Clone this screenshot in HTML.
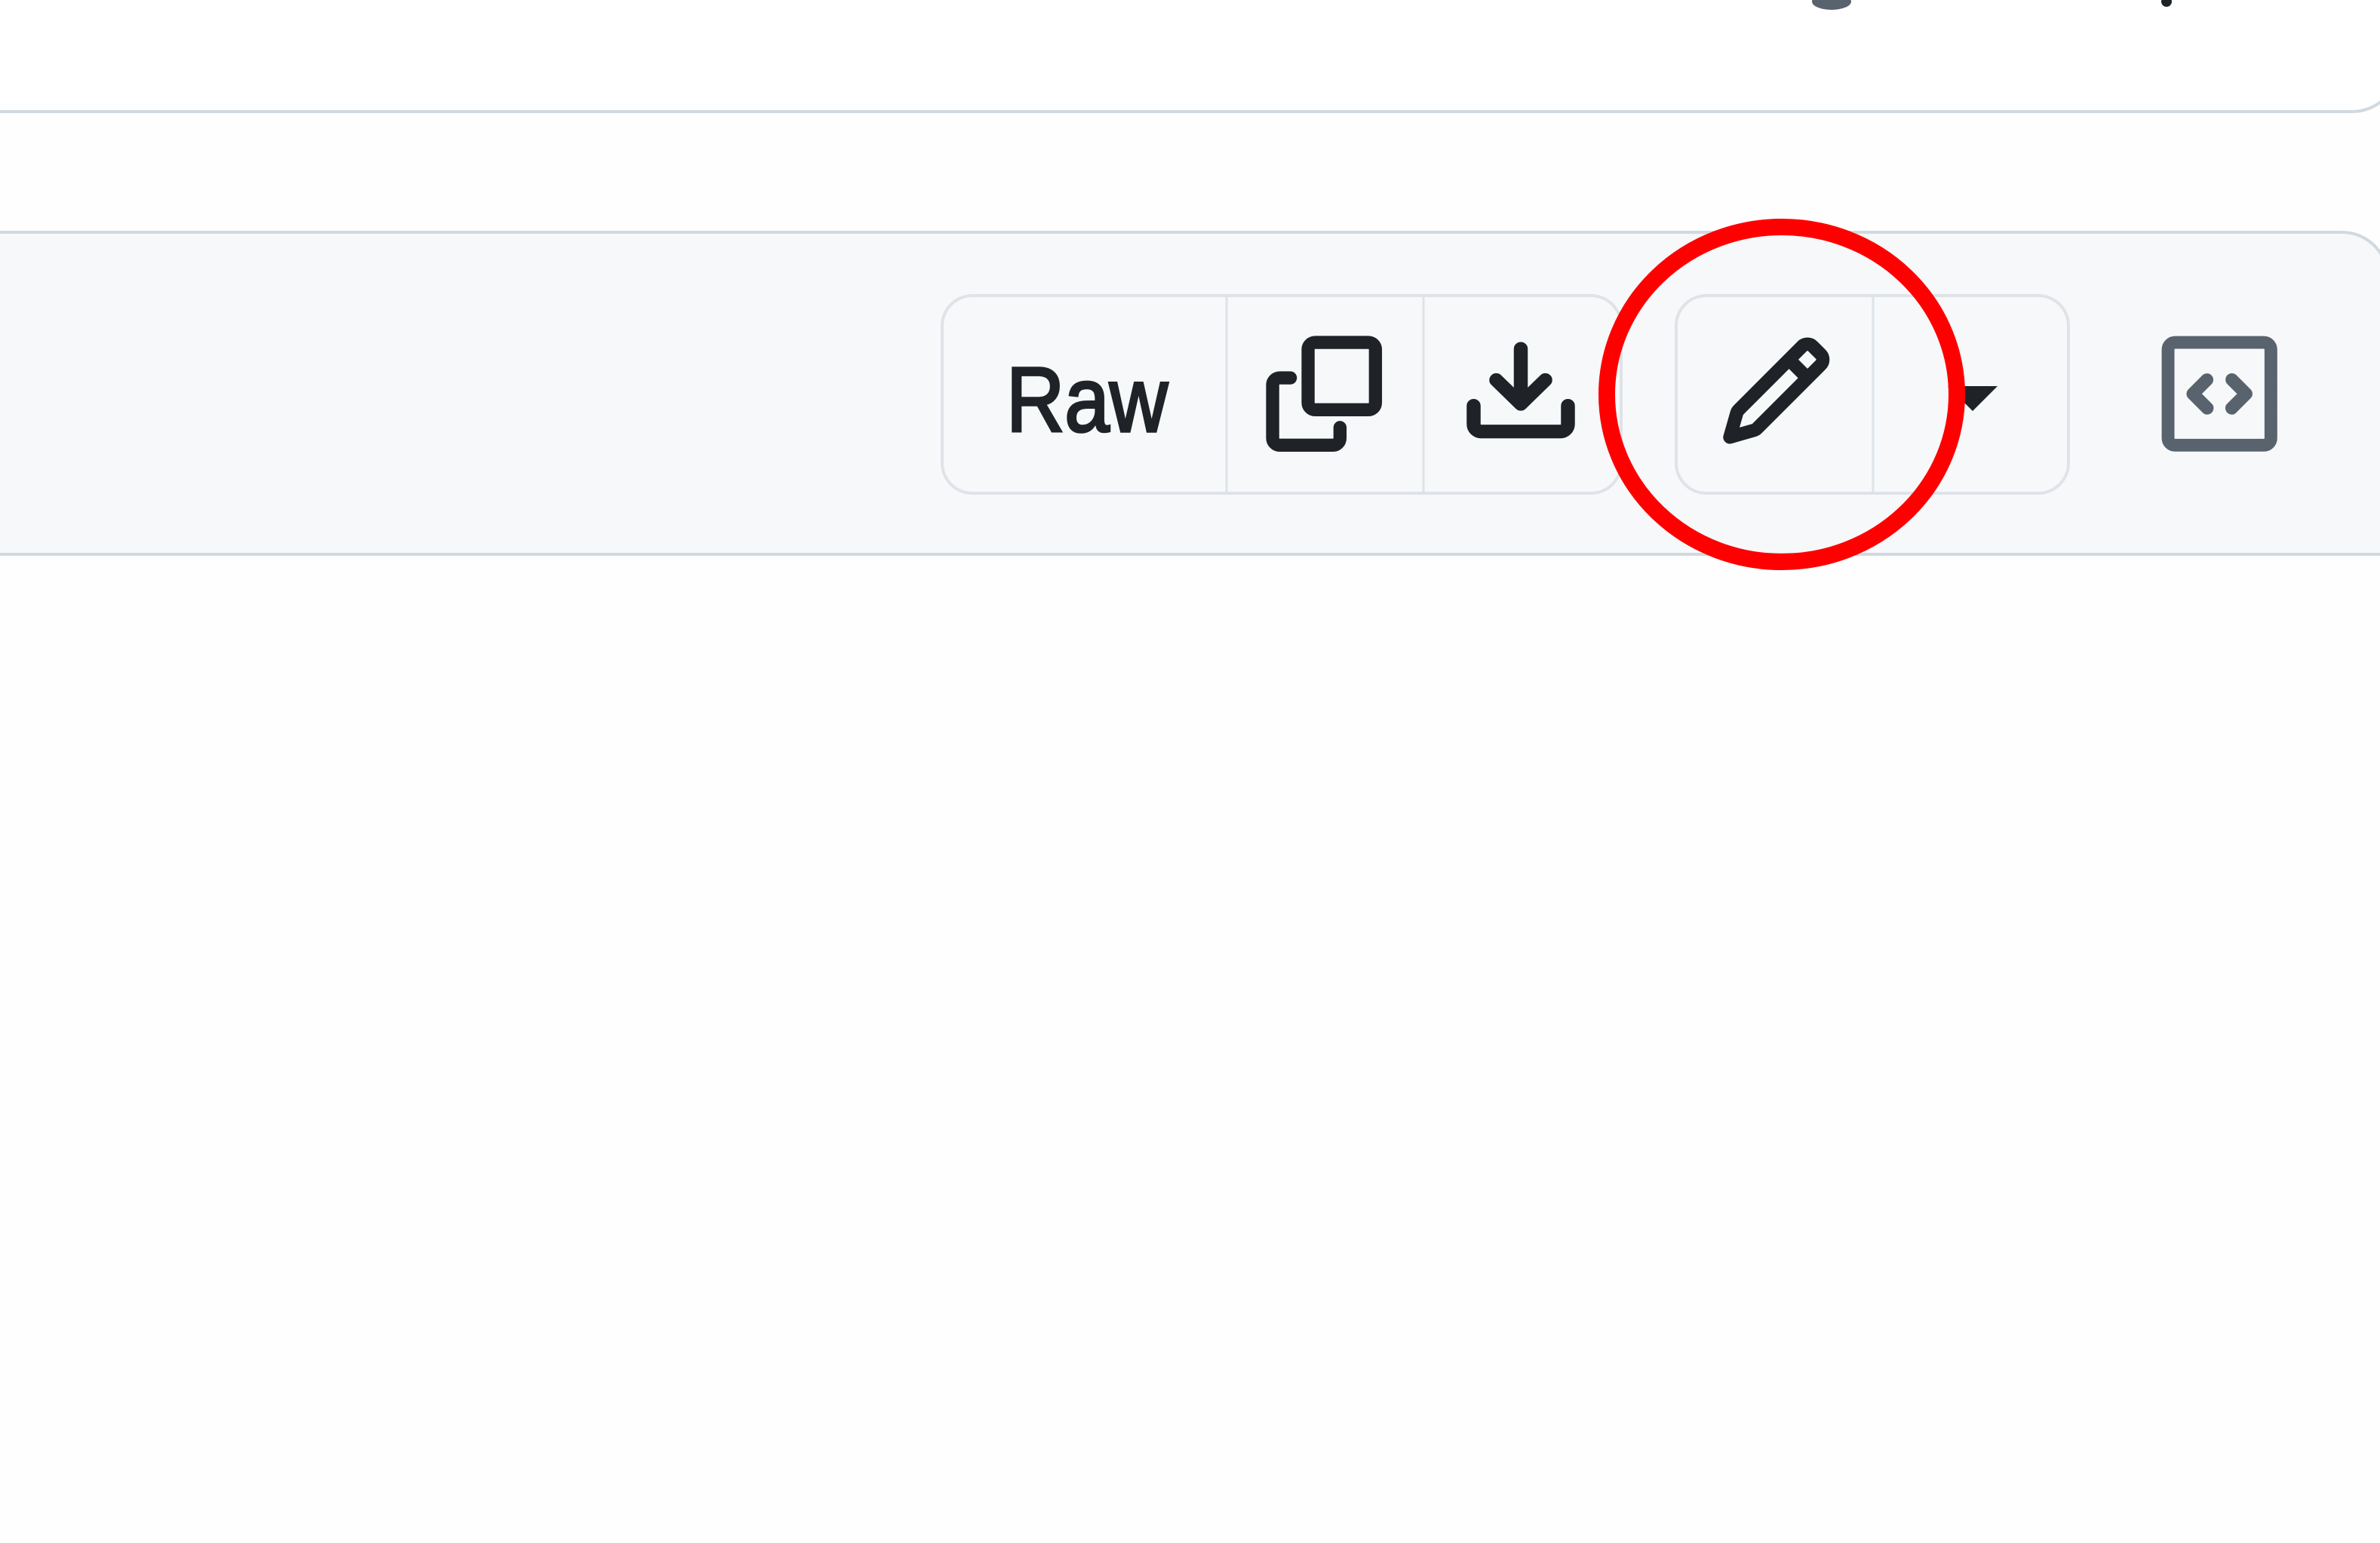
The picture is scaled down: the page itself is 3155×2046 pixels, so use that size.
<!DOCTYPE html>
<html><head><meta charset="utf-8"><style>
html,body{margin:0;padding:0;background:#fefefe;width:3155px;height:2046px;overflow:hidden}
svg{display:block}
</style></head><body>
<svg width="3155" height="2046" viewBox="0 0 3155 2046" xmlns="http://www.w3.org/2000/svg">
<rect width="3155" height="2046" fill="#fefefe"/>
<path d="M-10 -50 H3120 A60 60 0 0 1 3180 10 V86 A62 62 0 0 1 3118 148 H-10 Z" fill="#fff" stroke="#d1d9e0" stroke-width="4"/>
<ellipse cx="2428" cy="2" rx="26" ry="11" fill="#59636e"/>
<circle cx="2872" cy="2" r="7" fill="#1f2328"/>
<path d="M-10 308 H3105 A60 60 0 0 1 3165 368 V735 H-10 Z" fill="#f6f8fa" stroke="#d1d9e0" stroke-width="4"/>
<rect x="1249" y="392" width="900" height="262" rx="40" fill="#f6f8fa" stroke="#dfe3e8" stroke-width="4"/>
<line x1="1626" y1="394" x2="1626" y2="652" stroke="#dfe3e8" stroke-width="3"/>
<line x1="1887" y1="394" x2="1887" y2="652" stroke="#dfe3e8" stroke-width="3"/>
<text x="1334" y="572" font-family="Liberation Sans, sans-serif" font-size="122" fill="#1f2328" stroke="#1f2328" stroke-width="3.5" textLength="214" lengthAdjust="spacingAndGlyphs">Raw</text>
<g transform="translate(1680,447) scale(9.4)" fill="#1f2328" stroke="#1f2328" stroke-width="0.35">
<path d="M0 6.75C0 5.784.784 5 1.75 5h1.5a.75.75 0 0 1 0 1.5h-1.5a.25.25 0 0 0-.25.25v7.5c0 .138.112.25.25.25h7.5a.25.25 0 0 0 .25-.25v-1.5a.75.75 0 0 1 1.5 0v1.5A1.75 1.75 0 0 1 9.250 16h-7.5A1.75 1.75 0 0 1 0 14.25Z M5 1.75C5 .784 5.784 0 6.75 0h7.5C15.216 0 16 .784 16 1.75v7.5A1.75 1.75 0 0 1 14.25 11h-7.5A1.75 1.75 0 0 1 5 9.25Zm1.75-.25a.25.25 0 0 0-.25.25v7.5c0 .138.112.25.25.25h7.5a.25.25 0 0 0 .25-.25v-7.5a.25.25 0 0 0-.25-.25Z"/>
</g>
<g transform="translate(1936,443) scale(10,9.75)" fill="#1f2328" stroke="#1f2328" stroke-width="0.35">
<path d="M2.75 14A1.75 1.75 0 0 1 1 12.25v-2.5a.75.75 0 0 1 1.5 0v2.5c0 .138.112.25.25.25h10.5a.25.25 0 0 0 .25-.25v-2.5a.75.75 0 0 1 1.5 0v2.5A1.75 1.75 0 0 1 13.25 14Z M7.25 7.689V2a.75.75 0 0 1 1.5 0v5.689l1.970-1.969a.749.749 0 1 1 1.06 1.06l-3.25 3.25a.749.749 0 0 1-1.06 0L4.22 6.78a.749.749 0 1 1 1.06-1.06l1.97 1.969Z"/>
</g>
<rect x="2222" y="392" width="520" height="262" rx="40" fill="#f6f8fa" stroke="#dfe3e8" stroke-width="4"/>
<line x1="2483" y1="394" x2="2483" y2="652" stroke="#dfe3e8" stroke-width="3"/>
<g transform="translate(2276,440) scale(9.8)" fill="#1f2328" stroke="#1f2328" stroke-width="0.3">
<path d="M11.013 1.427a1.75 1.75 0 0 1 2.474 0l1.086 1.086a1.75 1.75 0 0 1 0 2.474l-8.61 8.61c-.21.21-.47.364-.756.445l-3.251.93a.75.75 0 0 1-.927-.928l.929-3.25c.081-.286.235-.547.445-.758l8.61-8.61Zm.176 4.823L9.75 4.81l-6.286 6.287a.253.253 0 0 0-.064.108l-.558 1.953 1.953-.558a.253.253 0 0 0 .108-.064Zm1.238-3.763a.25.25 0 0 0-.354 0L10.811 3.75l1.439 1.44 1.263-1.263a.25.25 0 0 0 0-.354Z"/>
</g>
<path d="M2582 512 H2648 L2615 545 Z" fill="#1f2328"/>
<g transform="translate(2867,447) scale(9.4)" fill="#59636e" stroke="#59636e" stroke-width="0.3">
<path d="M0 1.75C0 .784.784 0 1.75 0h12.5C15.216 0 16 .784 16 1.75v12.5A1.75 1.75 0 0 1 14.25 16H1.75A1.75 1.75 0 0 1 0 14.25Zm1.75-.25a.25.25 0 0 0-.25.25v12.5c0 .138.112.25.25.25h12.5a.25.25 0 0 0 .25-.25V1.75a.25.25 0 0 0-.25-.25Zm7.47 3.970a.75.75 0 0 1 1.06 0l2 2a.75.75 0 0 1 0 1.06l-2 2a.749.749 0 0 1-1.275-.326.749.749 0 0 1 .215-.734L10.69 8 9.22 6.53a.75.75 0 0 1 0-1.06ZM6.78 6.53 5.31 8l1.47 1.47a.749.749 0 0 1-.326 1.275.749.749 0 0 1-.734-.215l-2-2a.75.75 0 0 1 0-1.06l2-2a.751.751 0 0 1 1.042.018.751.751 0 0 1 .018 1.042Z"/>
</g>
<ellipse cx="2362" cy="523" rx="232" ry="222" fill="none" stroke="#ff0000" stroke-width="22"/>
</svg>
</body></html>
